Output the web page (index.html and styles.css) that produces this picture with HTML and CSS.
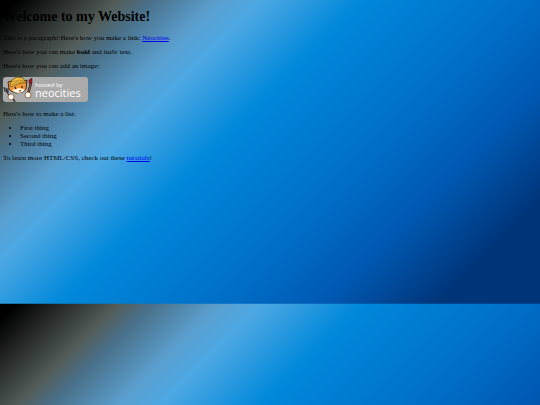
FILE: index.html
```html
<!DOCTYPE html>
<html lang="en">
<head>
    <meta charset="UTF-8">
    <meta name="viewport" content="width=device-width, initial-scale=1.0">
    <title>My Website</title>
    <link rel="stylesheet" href="styles.css">
</head>
<body>
    <h1>Welcome to my Website!</h1>

    <p>This is a paragraph! Here's how you make a link: <a href="#neocities">Neocities</a>.</p>

    <p>Here's how you can make <strong>bold</strong> and <em>italic</em> text.</p>

    <p>Here's how you can add an image:</p>

    <svg class="badge" viewBox="0 0 85 25" role="img" aria-label="hosted by neocities">
        <rect width="85" height="25" rx="3" fill="#aaaaaa"/>
        <!-- fork -->
        <path d="M1 10l1 4 3 1 0-4M3 11l1 4 3 5" fill="none" stroke="#30353b" stroke-width="1.2"/>
        <!-- brush -->
        <path d="M28 6l-3 11" stroke="#221510" stroke-width="2.4"/>
        <path d="M28 6l-3 11" stroke="#a56a42" stroke-width="1"/>
        <path d="M26 6l0-3 3-2v5l-2 1z" fill="#a51a2c" stroke="#40151a" stroke-width=".6"/>
        <!-- cat -->
        <path d="M6 12L5 5l4-1 4-3 6 0 2 3 3-1-1 9-3 3-7 1-5-2z" fill="#ef9839" stroke="#432a18" stroke-width="1"/>
        <path d="M9 13l4-1 3-1 3 1 3 0-2 3-5 1-4-1z" fill="#fff1da"/>
        <path d="M7 8l2-5 5-3 6 1 3 5-5 0-6 2-4 2z" fill="#edc044" stroke="#78541c" stroke-width=".8"/>
        <path d="M9 5l7-2 5 1M8 8l6-3 8 0" fill="none" stroke="#a87922" stroke-width=".7"/>
        <path d="M12 10l1 2M19 9l0 2" stroke="#201810" stroke-width="1.2"/>
        <path d="M16 13l2 0-1 2z" fill="#7c2518"/>
        <!-- paws -->
        <path d="M9 20l3 5" stroke="#30353b" stroke-width="1.6"/>
        <circle cx="8" cy="20" r="3" fill="#fff6e8" stroke="#70482a" stroke-width=".7"/>
        <circle cx="25" cy="18" r="3" fill="#fff6e8" stroke="#70482a" stroke-width=".7"/>
        <text class="badge-small" x="32" y="10">hosted by</text>
        <text class="badge-name" x="32" y="20">neocities</text>
    </svg>

    <p>Here's how to make a list:</p>

    <ul>
        <li>First thing</li>
        <li>Second thing</li>
        <li>Third thing</li>
    </ul>

    <p>To learn more HTML/CSS, check out these <a href="#tutorials">tutorials</a>!</p>
</body>
</html>
```
FILE: styles.css
```css
body {
    margin: 10px 3px;
    font-family: "Liberation Serif", "Times New Roman", serif;
    font-size: 7px;
    line-height: 8px;
    color: #000;
    background-image: linear-gradient(135deg,
        #000 0%,
        #000 2%,
        #525c58 14%,
        #4a7089 18%,
        #5a9fcf 26%,
        #4da8e3 31%,
        #0088da 43%,
        #006bc4 64%,
        #0057b0 75%,
        #003478 88%);
    background-size: 100% 75vh;
}
h1 {
    margin: 0 0 10px;
    font-size: 14px;
    line-height: 14px;
}
p {
    margin: 6px 0;
}
a {
    color: #0000ee;
}
ul {
    margin: 6px 0;
    padding-left: 17px;
}
.badge {
    display: block;
    width: 85px;
    height: 25px;
    margin: 7px 0 8px;
}
.badge text {
    font-family: "Open Sans", sans-serif;
    fill: #fff;
}
.badge-small {
    font-size: 6px;
}
.badge-name {
    font-size: 11px;
}
```
